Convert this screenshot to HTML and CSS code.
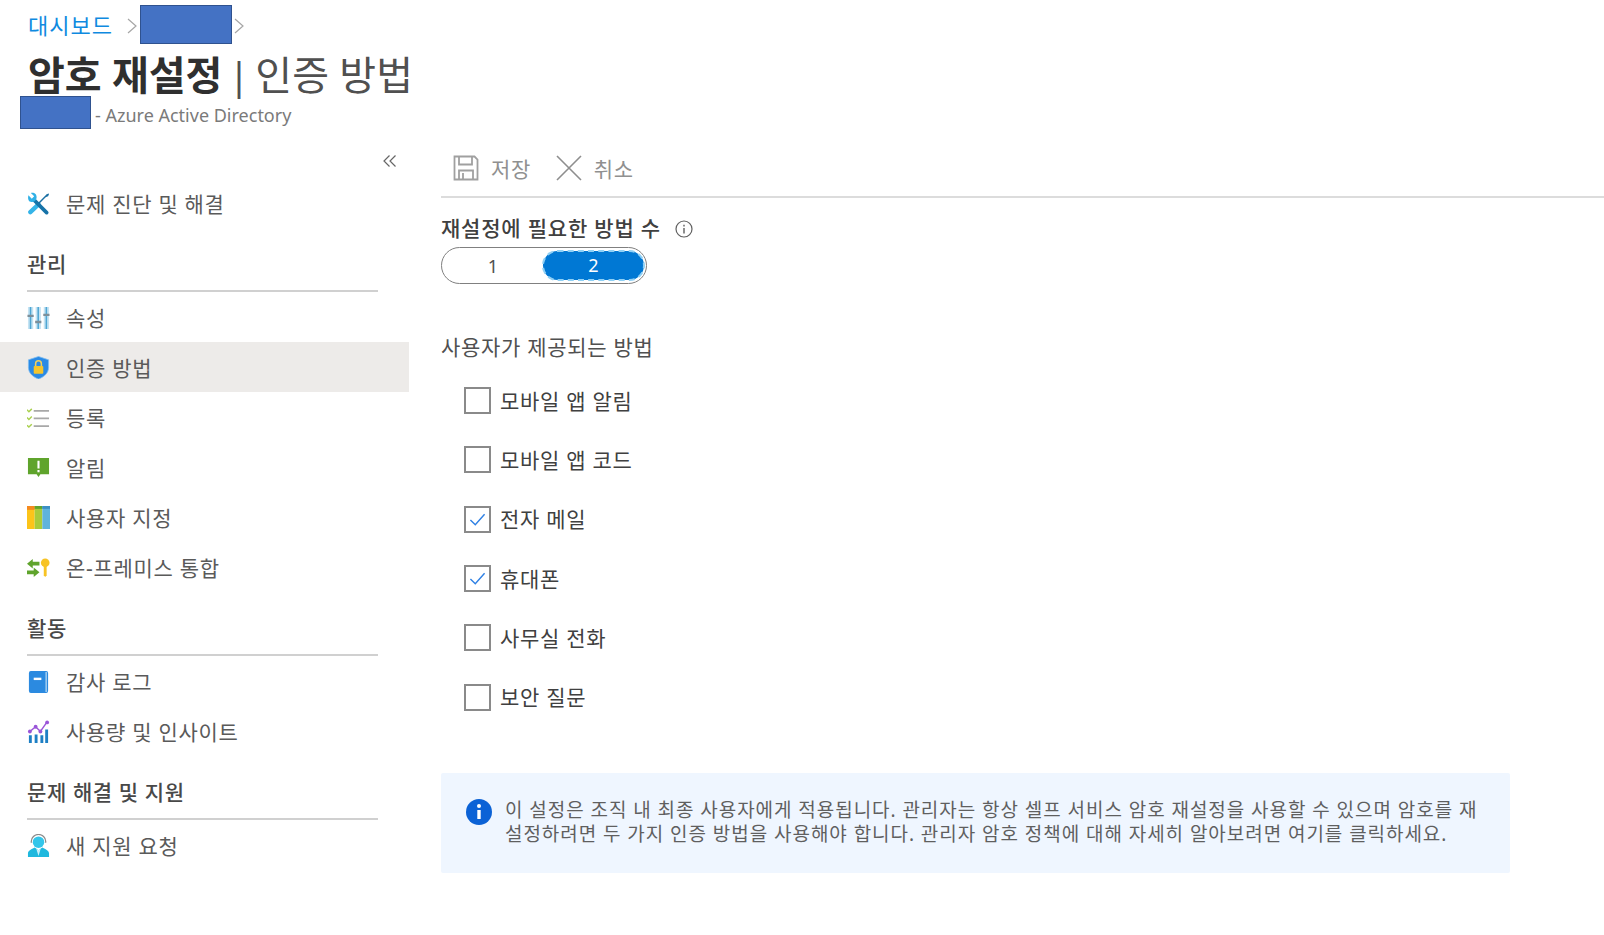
FILE: index.html
```html
<!DOCTYPE html>
<html lang="ko">
<head>
    <meta charset="UTF-8">
    <title>암호 재설정 | 인증 방법</title>
    <link rel="stylesheet" href="styles.css">
</head>
<body>
    <!-- Page header -->
    <header class="page-header">
        <nav class="breadcrumb">
            <a class="crumb-link">대시보드</a>
            <svg class="crumb-sep" viewBox="0 0 10 16"><path d="M1 1l8 7-8 7"/></svg>
            <span class="redact redact-crumb"></span>
            <svg class="crumb-sep crumb-sep-tight" viewBox="0 0 10 16"><path d="M1 1l8 7-8 7"/></svg>
        </nav>
        <h1 class="page-title"><strong>암호 재설정</strong><span class="title-bar">|</span><span class="title-sub">인증 방법</span></h1>
        <div class="page-subtitle">
            <span class="redact redact-tenant"></span>
            <span class="subtitle-text">- Azure Active Directory</span>
        </div>
    </header>

    <div class="layout">
        <!-- Left menu -->
        <aside class="sidebar">
            <div class="collapse-row">
                <svg class="collapse-icon" viewBox="0 0 14 14"><path d="M6.500 1.500L1 7l5.500 5.500M12.500 1.500L7 7l5.500 5.500"/></svg>
            </div>
            <a class="menu-item">
                <svg class="menu-icon" viewBox="0 0 24 24">
                    <path d="M12 13L3.500 21" stroke="#35b4e8" stroke-width="4.600" stroke-linecap="round"/>
                    <path d="M12 12l8-8" stroke="#1a6fa3" stroke-width="1.500"/>
                    <path d="M19 5.500l1-3 2.500-1 .5.500-1 2.500-3 1z" fill="#1a6fa3"/>
                    <path d="M8 9l12.500 12.500" stroke="#1673a8" stroke-width="3.800" stroke-linecap="round"/>
                    <path d="M1.500 3.500L5 7l2.500-2.500L4 1c3-1 6.500 1 6 5l-.5 2-2 2-2 .5C1.500 11 .5 7 1.500 3.500z" fill="#2fb0e6"/>
                </svg>
                <span>문제 진단 및 해결</span>
            </a>

            <h2 class="menu-group">관리</h2>
            <a class="menu-item">
                <svg class="menu-icon" viewBox="0 0 24 24">
                    <path d="M1 1h5.500v23H1zM9 1h5.500v23H9zM17.500 1H23v23h-5.500z" fill="#c4e3f3"/>
                    <path d="M3.700 1v23M11.700 1v23M20.200 1v23" stroke="#4fa6d3" stroke-width="1.600"/>
                    <path d="M.5 9h6.500v2.500H.5zM8.500 15.500H15V18H8.500zM17 8h6.500v2.500H17z" fill="#7d8f9a"/>
                </svg>
                <span>속성</span>
            </a>
            <a class="menu-item menu-active">
                <svg class="menu-icon" viewBox="0 0 24 24">
                    <path d="M12 .5l10.500 3.500v8c0 6-5 10-10.500 12C6.500 22 1.500 18 1.500 12V4z" fill="#2a8ae6" stroke="#7fbdf0" stroke-width=".8"/>
                    <rect x="7" y="10.500" width="10" height="8" rx="1" fill="#f5c52e"/>
                    <path d="M9 10.500V8a3 3 0 0 1 6 0v2.500" fill="none" stroke="#f0d060" stroke-width="1.600"/>
                </svg>
                <span>인증 방법</span>
            </a>
            <a class="menu-item">
                <svg class="menu-icon" viewBox="0 0 24 24">
                    <path d="M0 4l2 2 3-3M0 12l2 2 3-3M0 20l2 2 3-3" fill="none" stroke="#a9d04e" stroke-width="1.500"/>
                    <path d="M7 5h16M7 13h16M7 21h16" stroke="#a8a8a8" stroke-width="1.800"/>
                </svg>
                <span>등록</span>
            </a>
            <a class="menu-item">
                <svg class="menu-icon" viewBox="0 0 24 24">
                    <path d="M1 2h22v17h-9l-2 3-2-3H1z" fill="#5fa42c"/>
                    <path d="M12 5v8M12 14.500v2.500" stroke="#fff" stroke-width="2.200"/>
                </svg>
                <span>알림</span>
            </a>
            <a class="menu-item">
                <svg class="menu-icon" viewBox="0 0 24 24">
                    <path d="M0 0h8v24H0z" fill="#fcc419"/>
                    <path d="M8 0h8v24H8z" fill="#a9cb3a"/>
                    <path d="M16 0h8v24h-8z" fill="#5fb3dd"/>
                    <path d="M0 0h8v4H0z" fill="#f58a1f"/>
                    <path d="M8 0h8v3H8z" fill="#5fa42c"/>
                    <path d="M16 0h8v3h-8z" fill="#3c8fc4"/>
                </svg>
                <span>사용자 지정</span>
            </a>
            <a class="menu-item">
                <svg class="menu-icon" viewBox="0 0 24 24">
                    <path d="M0 8l6-5v3h7v4H6v3zM13 17l-6-5v3H0v4h7v3z" fill="#5fa42c"/>
                    <circle cx="19" cy="7" r="4.500" fill="#f7c325"/>
                    <path d="M17.500 9h3v11l-1.500 2-1.500-2z" fill="#f7c325"/>
                </svg>
                <span>온-프레미스 통합</span>
            </a>

            <h2 class="menu-group">활동</h2>
            <a class="menu-item">
                <svg class="menu-icon" viewBox="0 0 24 24">
                    <rect x="2" y="1" width="20" height="23" rx="2" fill="#2b8ae0"/>
                    <path d="M20 2v21" stroke="#a7d2f3" stroke-width="1.500"/>
                    <path d="M7 8h8v2.500H7z" fill="#fff"/>
                </svg>
                <span>감사 로그</span>
            </a>
            <a class="menu-item">
                <svg class="menu-icon" viewBox="0 0 24 24">
                    <path d="M2 16h3v8H2zM8 15h3v9H8zM14 16h3v8h-3zM19 10h3v14h-3z" fill="#1d7fc4"/>
                    <path d="M3 12l6-5 5 5 7-10" fill="none" stroke="#9a55d8" stroke-width="1.500"/>
                    <g fill="#9a55d8"><circle cx="3" cy="12" r="2"/><circle cx="9" cy="7" r="2"/><circle cx="14" cy="12" r="2"/><circle cx="21" cy="2.500" r="2"/></g>
                </svg>
                <span>사용량 및 인사이트</span>
            </a>

            <h2 class="menu-group">문제 해결 및 지원</h2>
            <a class="menu-item">
                <svg class="menu-icon" viewBox="0 0 24 24">
                    <circle cx="12" cy="8.500" r="6" fill="#33c6ea"/>
                    <path d="M4.500 9V7.500a7.500 7 0 0 1 15 0V9" fill="none" stroke="#8a8a8a" stroke-width="1.300"/>
                    <path d="M1 24v-4c0-3 5-5 7-6l4 3 4-3c2 1 7 3 7 6v4z" fill="#1fb8de"/>
                    <path d="M12 17l-2.500-2.500L12 23l2.500-8.500z" fill="#c8f0fa"/>
                </svg>
                <span>새 지원 요청</span>
            </a>
        </aside>

        <!-- Main pane -->
        <main class="content">
            <div class="toolbar">
                <button class="tool-btn">
                    <svg class="tool-icon" viewBox="0 0 26 26"><path d="M1.500 1.500h20l3 3v20h-23z M6 1.500v8h13v-8 M6 24.500v-9h14v9 M10 18v6.500" fill="none" stroke="#a0a0a0" stroke-width="1.800"/></svg>
                    <span>저장</span>
                </button>
                <button class="tool-btn">
                    <svg class="tool-icon" viewBox="0 0 26 26"><path d="M1 1l24 24M25 1L1 25" fill="none" stroke="#8e8e8e" stroke-width="1.600"/></svg>
                    <span>취소</span>
                </button>
            </div>

            <div class="field-label">
                <span>재설정에 필요한 방법 수</span>
                <svg class="info-outline" viewBox="0 0 18 18"><circle cx="9" cy="9" r="8" fill="none" stroke="#606060" stroke-width="1.200"/><path d="M9 8v5.500M9 4.800v1.700" stroke="#606060" stroke-width="1.400"/></svg>
            </div>
            <div class="toggle">
                <span class="toggle-opt">1</span>
                <span class="toggle-opt toggle-on">2</span>
            </div>

            <p class="methods-label">사용자가 제공되는 방법</p>
            <ul class="methods">
                <li class="method"><span class="check"></span>모바일 앱 알림</li>
                <li class="method"><span class="check"></span>모바일 앱 코드</li>
                <li class="method"><span class="check"><svg viewBox="0 0 26 26"><path d="M5 13.500l5.500 5.500L21 7" fill="none" stroke="#2f80e4" stroke-width="1.600"/></svg></span>전자 메일</li>
                <li class="method"><span class="check"><svg viewBox="0 0 26 26"><path d="M5 13.500l5.500 5.500L21 7" fill="none" stroke="#2f80e4" stroke-width="1.600"/></svg></span>휴대폰</li>
                <li class="method"><span class="check"></span>사무실 전화</li>
                <li class="method"><span class="check"></span>보안 질문</li>
            </ul>

            <div class="notice">
                <svg class="notice-icon" viewBox="0 0 26 26"><circle cx="13" cy="13" r="13" fill="#0b62d6"/><path d="M13 11v9" stroke="#fff" stroke-width="3.400"/><circle cx="13" cy="7" r="2" fill="#fff"/></svg>
                <p>이 설정은 조직 내 최종 사용자에게 적용됩니다. 관리자는 항상 셀프 서비스 암호 재설정을 사용할 수 있으며 암호를 재설정하려면 두 가지 인증 방법을 사용해야 합니다. 관리자 암호 정책에 대해 자세히 알아보려면 여기를 클릭하세요.</p>
            </div>
        </main>
    </div>
</body>
</html>
```

FILE: styles.css
```css
body {
    margin: 0;
    background: #fff;
    color: #505050;
    font-family: "Noto Sans", "Noto Sans CJK KR", sans-serif;
    overflow: hidden;
}
svg {
    display: block;
}

/* header */
.page-header {
    height: 140px;
    padding: 5px 0 0 20px;
    box-sizing: border-box;
}
.breadcrumb {
    display: flex;
    align-items: center;
    height: 39px;
    padding-left: 8px;
}
.crumb-link {
    padding-bottom: 2px;
    color: #0f8ae0;
    font-size: 22px;
    letter-spacing: 1px;
}
.crumb-sep {
    width: 10px;
    height: 16px;
    margin: 2px 3px 0 14px;
    fill: none;
    stroke: #a6a6a6;
    stroke-width: 1.200;
}
.crumb-sep-tight {
    margin: 2px 0 0 2px;
}
.redact {
    display: block;
    flex: none;
    box-sizing: border-box;
    background: #4472c4;
    border: 1.500px solid #2f528f;
}
.redact-crumb {
    width: 92px;
    height: 39px;
}
.redact-tenant {
    width: 71px;
    height: 33px;
}
.page-title {
    display: flex;
    align-items: center;
    height: 52px;
    margin: 0;
    padding: 10px 0 0 8px;
    box-sizing: border-box;
    font-size: 40px;
    font-weight: 400;
    line-height: 44px;
    color: #505050;
}
.page-title strong {
    color: #2f2f2f;
    font-weight: 700;
}
.title-bar {
    margin: 0 6px 0 6px;
    font-size: 38px;
}
.page-subtitle {
    display: flex;
    align-items: center;
    gap: 4px;
    color: #7a7a7a;
    font-size: 18px;
}
.subtitle-text {
    padding-top: 4px;
}

/* sidebar */
.layout {
    display: flex;
}
.sidebar {
    flex: none;
    width: 409px;
}
.collapse-row {
    display: flex;
    justify-content: flex-end;
    height: 38px;
    padding: 14px 12px 0 0;
    box-sizing: border-box;
}
.collapse-icon {
    width: 14px;
    height: 14px;
    fill: none;
    stroke: #666;
    stroke-width: 1.200;
}
.menu-item {
    display: flex;
    align-items: center;
    height: 50px;
    padding-left: 27px;
    font-size: 21px;
    letter-spacing: 0.7px;
    color: #5a5a5a;
}
.menu-active {
    background: #edebe9;
}
.menu-icon {
    flex: none;
    width: 23px;
    height: 23px;
    margin-right: 16px;
}
.menu-group {
    height: 48px;
    margin: 16px 31px 0 27px;
    border-bottom: 2px solid #d0d0d0;
    box-sizing: border-box;
    font-size: 21px;
    font-weight: 500;
    letter-spacing: 0.6px;
    line-height: 41px;
    color: #484848;
}

/* main pane */
.content {
    flex: 1;
    padding: 0 0 0 32px;
}
.toolbar {
    display: flex;
    gap: 25px;
    height: 58px;
    padding: 14px 0 0 12px;
    box-sizing: border-box;
    border-bottom: 2px solid #dcdcdc;
}
.tool-btn {
    display: flex;
    align-items: center;
    gap: 12px;
    height: 28px;
    padding: 0;
    border: none;
    background: none;
    color: #909090;
    font: inherit;
    font-size: 21px;
    letter-spacing: 0.6px;
}
.tool-icon {
    width: 26px;
    height: 26px;
}
.field-label {
    display: flex;
    align-items: center;
    gap: 14px;
    height: 36px;
    margin-top: 11px;
    font-size: 21px;
    font-weight: 500;
    letter-spacing: 0.8px;
    color: #404040;
}
.info-outline {
    width: 18px;
    height: 18px;
    margin-top: 3px;
}
.toggle {
    display: flex;
    align-items: center;
    width: 206px;
    height: 37px;
    margin-top: 2px;
    padding: 0 2px 0 1px;
    box-sizing: border-box;
    border: 1.500px solid #808080;
    border-radius: 19px;
}
.toggle-opt {
    flex: 1;
    text-align: center;
    font-size: 18px;
    color: #505050;
}
.toggle-on {
    flex: none;
    width: 101px;
    height: 29px;
    line-height: 29px;
    border-radius: 15px;
    background: #0078d4;
    color: #fff;
    outline: 2px dashed #8fd0f5;
    outline-offset: -1px;
}
.methods-label {
    margin: 45px 0 0;
    font-size: 21px;
    letter-spacing: 0.7px;
    line-height: 36px;
}
.methods {
    margin: 5px 0 0;
    padding: 0 0 0 23px;
    list-style: none;
}
.method {
    display: flex;
    align-items: center;
    gap: 9px;
    height: 59.300px;
    font-size: 21px;
    letter-spacing: 0.7px;
    color: #404040;
}
.check {
    flex: none;
    width: 27px;
    height: 27px;
    margin-top: 2px;
    box-sizing: border-box;
    border: 2px solid #8a8a8a;
}
.notice {
    display: flex;
    gap: 13px;
    width: 1069px;
    height: 100px;
    margin-top: 47px;
    padding: 25px 20px 0 25px;
    box-sizing: border-box;
    background: #eff6ff;
    border-radius: 2px;
}
.notice-icon {
    flex: none;
    width: 26px;
    height: 26px;
    margin-top: 1px;
}
.notice p {
    margin: 0;
    font-size: 19px;
    letter-spacing: 0.95px;
    line-height: 24px;
    color: #5f5f5f;
}
```
